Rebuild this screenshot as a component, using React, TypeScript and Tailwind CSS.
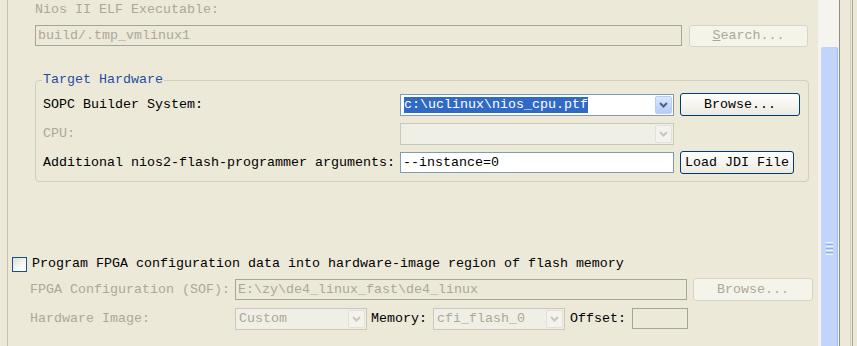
import type { ReactNode } from "react";

const disabledText = "text-[#aca899]";

function Chevron({ disabled }: { disabled?: boolean }) {
  return (
    <svg width="9" height="6" viewBox="0 0 9 6">
      <path
        d="M1 1 L4.5 4.5 L8 1"
        fill="none"
        stroke={disabled ? "#c9c7ba" : "#4d6185"}
        strokeWidth="2"
      />
    </svg>
  );
}

function Combo({
  width,
  children,
  disabled,
}: {
  width: string;
  children?: ReactNode;
  disabled?: boolean;
}) {
  return (
    <div
      className={[
        "flex h-[22px] items-stretch border p-[1px]",
        width,
        disabled ? "border-[#c9c7ba] bg-[#f0efe6]" : "border-[#7f9db9] bg-white",
      ].join(" ")}
    >
      <div className="flex flex-1 items-center overflow-hidden whitespace-nowrap pl-[2px]">
        {children}
      </div>
      <div
        className={[
          "flex w-[17px] items-center justify-center rounded-[2px]",
          disabled
            ? "border border-[#e3e1d6] bg-[#f3f2ec]"
            : "border border-[#b9cdf6] bg-gradient-to-b from-[#dce7fd] to-[#b6cbf6]",
        ].join(" ")}
      >
        <Chevron disabled={disabled} />
      </div>
    </div>
  );
}

function Button({
  width,
  height,
  children,
  disabled,
}: {
  width: string;
  height: string;
  children: ReactNode;
  disabled?: boolean;
}) {
  return (
    <div
      className={[
        "flex items-center justify-center rounded-[3px] border whitespace-nowrap",
        width,
        height,
        disabled
          ? "border-[#d6d4c6] bg-[#f5f4ea] text-[#aca899]"
          : "border-[#003c74] bg-gradient-to-b from-white to-[#eceae0] text-black",
      ].join(" ")}
    >
      {children}
    </div>
  );
}

export default function App() {
  return (
    <div className="flex h-[346px] w-[857px] overflow-hidden bg-[#ece9d8] font-['Liberation_Mono','DejaVu_Sans_Mono',monospace] text-[13.33px] leading-[16px] text-black">
      {/* form area */}
      <div className="flex w-[818px] pl-[7px]">
        <div className="flex flex-1 flex-col border-l border-[#c4c1b2] pt-[2px]">
          {/* ELF executable */}
          <div className="pl-[27px]">
            <div className={`h-[16px] ${disabledText}`}>Nios II ELF Executable:</div>
            <div className="mt-[7px] flex items-start">
              <div className="flex h-[21px] w-[647px] items-center border border-[#a5a69b] pl-[2px] text-[#aca899]">
                build/.tmp_vmlinux1
              </div>
              <div className="ml-[7px]">
                <Button width="w-[119px]" height="h-[22px]" disabled>
                  <span className="underline">S</span>earch...
                </Button>
              </div>
            </div>
          </div>

          {/* Target hardware group */}
          <div className="relative ml-[27px] mt-[33px] w-[774px] rounded-[4px] border border-[#d0d0bf] pb-[7px] pl-[7px] pt-[12px]">
            <span className="absolute -top-[9px] left-[6px] bg-[#ece9d8] px-[1px] text-[#1f4ea6]">
              Target Hardware
            </span>
            <div className="flex flex-col gap-[6px]">
              <div className="flex h-[23px] items-center">
                <div className="w-[357px]">SOPC Builder System:</div>
                <Combo width="w-[274px]">
                  <span className="bg-[#316ac5] text-white">c:\uclinux\nios_cpu.ptf</span>
                </Combo>
                <div className="ml-[6px]">
                  <Button width="w-[120px]" height="h-[23px]">
                    Browse...
                  </Button>
                </div>
              </div>
              <div className="flex h-[23px] items-center">
                <div className={`w-[357px] ${disabledText}`}>CPU:</div>
                <Combo width="w-[274px]" disabled />
              </div>
              <div className="flex h-[23px] items-center">
                <div className="w-[357px]">Additional nios2-flash-programmer arguments:</div>
                <div className="flex h-[21px] w-[274px] items-center border border-[#7f9db9] bg-white pl-[2px]">
                  --instance=0
                </div>
                <div className="ml-[6px]">
                  <Button width="w-[114px]" height="h-[23px]">
                    Load JDI File
                  </Button>
                </div>
              </div>
            </div>
          </div>

          {/* FPGA programming */}
          <div className="mt-[74px] flex h-[16px] items-center pl-[4px]">
            <div className="h-[15px] w-[15px] border border-[#1c5180] bg-gradient-to-br from-[#dcdcd7] via-[#f4f4f0] to-white" />
            <span className="ml-[5px]">
              Program FPGA configuration data into hardware-image region of flash memory
            </span>
          </div>
          <div className="mt-[6px] flex h-[23px] items-center pl-[22px]">
            <div className={`w-[205px] ${disabledText}`}>FPGA Configuration (SOF):</div>
            <div className="flex h-[21px] w-[452px] items-center border border-[#a5a69b] pl-[2px] text-[#aca899]">
              E:\zy\de4_linux_fast\de4_linux
            </div>
            <div className="ml-[6px]">
              <Button width="w-[120px]" height="h-[23px]" disabled>
                Browse...
              </Button>
            </div>
          </div>
          <div className="mt-[6px] flex h-[23px] items-center pl-[22px]">
            <div className={`w-[205px] ${disabledText}`}>Hardware Image:</div>
            <Combo width="w-[132px]" disabled>
              <span className={disabledText}>Custom</span>
            </Combo>
            <span className="ml-[4px]">Memory:</span>
            <div className="ml-[6px]">
              <Combo width="w-[132px]" disabled>
                <span className={disabledText}>cfi_flash_0</span>
              </Combo>
            </div>
            <span className="ml-[5px]">Offset:</span>
            <div className="ml-[6px] h-[21px] w-[56px] border border-[#a5a69b]" />
          </div>
        </div>
      </div>

      {/* vertical scrollbar */}
      <div className="flex w-[22px] flex-col border-r border-[#8e8f86] bg-[#f5f4ee] pt-[47px]">
        <div className="ml-[3px] flex w-[17px] flex-1 flex-col items-center rounded-t-[2px] border-r border-[#a3bcef] bg-[#c3d4fb] pt-[195px]">
          <div className="flex flex-col gap-[1px]">
            <div className="h-[1px] w-[7px] bg-[#eef4fe]" />
            <div className="h-[1px] w-[7px] bg-[#8cb0f8]" />
            <div className="h-[1px] w-[7px] bg-[#eef4fe]" />
            <div className="h-[1px] w-[7px] bg-[#8cb0f8]" />
            <div className="h-[1px] w-[7px] bg-[#eef4fe]" />
            <div className="h-[1px] w-[7px] bg-[#8cb0f8]" />
            <div className="h-[1px] w-[7px] bg-[#eef4fe]" />
          </div>
        </div>
      </div>

      {/* right edge */}
      <div className="flex w-[17px]">
        <div className="w-[10px]" />
        <div className="w-[1px] bg-[#d4d0c0]" />
        <div className="w-[1px]" />
        <div className="w-[1px] bg-[#a9a697]" />
      </div>
    </div>
  );
}
